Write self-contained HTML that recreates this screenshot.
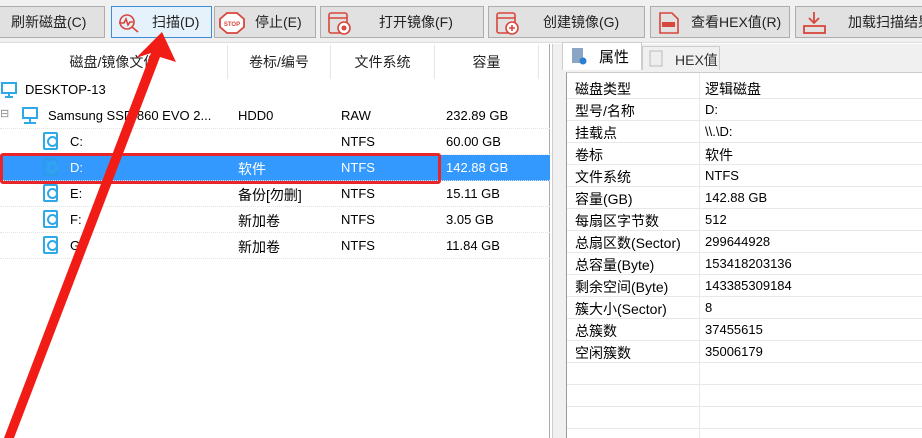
<!DOCTYPE html>
<html><head><meta charset="utf-8"><style>
*{margin:0;padding:0;box-sizing:border-box}
body{width:922px;height:438px;overflow:hidden;background:#fff;font-family:"Liberation Sans","Noto Sans CJK SC",sans-serif;font-size:13px;color:#000;position:relative}
.tb{position:absolute;left:0;top:0;width:922px;height:43px;background:#f0f0f0;border-bottom:1px solid #ddd}
.btn{position:absolute;top:6px;height:32px;background:#e1e1e1;border:1px solid #adadad;display:flex;align-items:center;font-size:14px;color:#222}
.btn.sel{background:#e5f1fb;border:1px solid #3c8cd8}
.ab{position:absolute}
.hdr{position:absolute;top:45px;height:34px;font-size:14px;display:flex;align-items:center;justify-content:center;border-right:1px solid #e5e5e5;color:#222}
.row{position:absolute;left:0;width:550px;height:26px;border-bottom:1px dotted #e3e3e3;font-size:13px}
.row span{position:absolute;top:5px}
.prow{position:absolute;left:567px;width:355px;height:22px;border-bottom:1px solid #e8e8e8;font-size:14px}
.prow span{position:absolute;top:2px}
.prow .v{left:138px;font-size:13px;top:3px}
.disk{position:absolute;width:15px;height:18px;border:2px solid #2fa8e8;border-radius:2px}
.disk:after{content:"";position:absolute;left:2px;top:2px;width:7px;height:7px;border:2px solid #2fa8e8;border-radius:50%}
</style></head><body>
<div class="tb">
 <div class="btn" style="left:-2px;width:107px;padding-left:12px">刷新磁盘(C)</div>
 <div class="btn sel" style="left:111px;width:101px">
  <svg class="ab" style="left:6px;top:6px" width="22" height="20" viewBox="0 0 22 20"><circle cx="9" cy="9" r="7" fill="none" stroke="#d9463b" stroke-width="1.6"/><path d="M1 10 L6 10 L8 6 L10 12 L12 9 L15 9 M14 14 L20 19" fill="none" stroke="#d9463b" stroke-width="1.6"/></svg>
  <span style="position:absolute;left:40px">扫描(D)</span></div>
 <div class="btn" style="left:214px;width:102px">
  <svg class="ab" style="left:4px;top:5px" width="26" height="22" viewBox="0 0 26 22"><polygon points="8,1 18,1 25,7 25,15 18,21 8,21 1,15 1,7" fill="#fff" stroke="#d9463b" stroke-width="1.8"/><text x="13" y="14" font-size="6" text-anchor="middle" fill="#d9463b" font-family="Liberation Sans" font-weight="bold">STOP</text></svg>
  <span style="position:absolute;left:40px">停止(E)</span></div>
 <div class="btn" style="left:320px;width:164px">
  <svg class="ab" style="left:6px;top:3px" width="26" height="26" viewBox="0 0 26 26"><rect x="2" y="3" width="18" height="20" rx="2" fill="none" stroke="#d9463b" stroke-width="1.6"/><line x1="2" y1="8" x2="20" y2="8" stroke="#d9463b" stroke-width="1.4"/><circle cx="17" cy="18" r="6" fill="#fff" stroke="#d9463b" stroke-width="1.6"/><circle cx="17" cy="18" r="2.5" fill="#d9463b"/></svg>
  <span style="position:absolute;left:58px">打开镜像(F)</span></div>
 <div class="btn" style="left:488px;width:157px">
  <svg class="ab" style="left:6px;top:3px" width="26" height="26" viewBox="0 0 26 26"><rect x="2" y="3" width="18" height="20" rx="2" fill="none" stroke="#d9463b" stroke-width="1.6"/><line x1="2" y1="8" x2="20" y2="8" stroke="#d9463b" stroke-width="1.4"/><circle cx="17" cy="18" r="6" fill="#fff" stroke="#d9463b" stroke-width="1.6"/><path d="M14 18h6M17 15v6" stroke="#d9463b" stroke-width="1.6"/></svg>
  <span style="position:absolute;left:54px">创建镜像(G)</span></div>
 <div class="btn" style="left:650px;width:140px">
  <svg class="ab" style="left:6px;top:4px" width="24" height="24" viewBox="0 0 24 24"><path d="M3 2h12l6 6v14H3z" fill="none" stroke="#d9463b" stroke-width="1.6"/><rect x="5" y="11" width="13" height="5" fill="#d9463b"/></svg>
  <span style="position:absolute;left:40px">查看HEX值(R)</span></div>
 <div class="btn" style="left:795px;width:140px">
  <svg class="ab" style="left:6px;top:4px" width="26" height="24" viewBox="0 0 26 24"><path d="M12 1v11M7 7l5 5 5-5" fill="none" stroke="#d9463b" stroke-width="1.8"/><rect x="2" y="15" width="21" height="7" fill="none" stroke="#d9463b" stroke-width="1.8"/></svg>
  <span style="position:absolute;left:52px">加载扫描结果</span></div>
</div>

<div class="ab" style="left:0;top:44px;width:553px;height:394px;background:#fff;border-right:1px solid #ccc"></div>
<div class="hdr" style="left:0;width:228px">磁盘/镜像文件</div>
<div class="hdr" style="left:228px;width:103px">卷标/编号</div>
<div class="hdr" style="left:331px;width:104px">文件系统</div>
<div class="hdr" style="left:435px;width:104px">容量</div>
<div class="ab" style="left:549px;top:44px;width:1px;height:394px;background:#aaa"></div>

<div class="row" style="top:77px;border:none"><svg class="ab" style="left:0;top:4px" width="18" height="18" viewBox="0 0 18 18"><rect x="2" y="2" width="14" height="10" fill="none" stroke="#2fa8e8" stroke-width="2"/><path d="M5 16h8M9 12v4" stroke="#2fa8e8" stroke-width="2"/></svg><span style="left:25px">DESKTOP-13</span></div>
<div class="row" style="top:103px"><span style="left:0;top:4px;color:#888;font-size:11px">⊟</span><svg class="ab" style="left:21px;top:3px" width="18" height="20" viewBox="0 0 18 20"><rect x="2" y="2" width="14" height="10" fill="none" stroke="#2fa8e8" stroke-width="2"/><path d="M9 12v4M3 17h12" stroke="#2fa8e8" stroke-width="2"/></svg><span style="left:48px">Samsung SSD 860 EVO 2...</span><span style="left:238px">HDD0</span><span style="left:341px">RAW</span><span style="left:446px">232.89 GB</span></div>
<div class="row" style="top:129px"><div class="disk" style="left:43px;top:3px"></div><span style="left:70px">C:</span><span style="left:341px">NTFS</span><span style="left:446px">60.00 GB</span></div>
<div class="row" style="top:155px;background:#3399ff;color:#fff;height:26px"><div class="disk" style="left:43px;top:3px;border-color:#2b9ce6"></div><span style="left:70px">D:</span><span style="left:238px;font-size:14px;top:4px">软件</span><span style="left:341px">NTFS</span><span style="left:446px">142.88 GB</span></div>
<div class="row" style="top:181px"><div class="disk" style="left:43px;top:3px"></div><span style="left:70px">E:</span><span style="left:238px;font-size:14px;top:4px">备份[勿删]</span><span style="left:341px">NTFS</span><span style="left:446px">15.11 GB</span></div>
<div class="row" style="top:207px"><div class="disk" style="left:43px;top:3px"></div><span style="left:70px">F:</span><span style="left:238px;font-size:14px;top:4px">新加卷</span><span style="left:341px">NTFS</span><span style="left:446px">3.05 GB</span></div>
<div class="row" style="top:233px"><div class="disk" style="left:43px;top:3px"></div><span style="left:70px">G:</span><span style="left:238px;font-size:14px;top:4px">新加卷</span><span style="left:341px">NTFS</span><span style="left:446px">11.84 GB</span></div>
<div class="ab" style="left:0;top:153px;width:441px;height:31px;border:3px solid #e8262a;border-radius:3px"></div>

<div class="ab" style="left:553px;top:44px;width:369px;height:394px;background:#f0f0f0"></div>
<div class="ab" style="left:562px;top:42px;width:80px;height:28px;background:#fff;border:1px solid #ccc;border-bottom:none;font-size:15px"><svg class="ab" style="left:8px;top:4px" width="16" height="18" viewBox="0 0 16 18"><rect x="1" y="1" width="11" height="15" fill="#8aa6c4"/><circle cx="12" cy="14" r="3.5" fill="#2a7fd4"/></svg><span class="ab" style="left:36px;top:3px">属性</span></div>
<div class="ab" style="left:642px;top:46px;width:78px;height:24px;border:1px solid #ccc;border-bottom:none;font-size:14px;color:#333"><svg class="ab" style="left:6px;top:3px" width="14" height="17"><rect x="1" y="1" width="12" height="15" fill="#eee" stroke="#bbb"/></svg><span class="ab" style="left:32px;top:3px">HEX值</span></div>
<div class="ab" style="left:566px;top:72px;width:356px;height:366px;background:#fff;border-left:1px solid #999;border-top:1px solid #ccc"></div>
<div class="ab" style="left:699px;top:73px;width:1px;height:365px;background:#e8e8e8"></div>
<div class="prow" style="top:77px"><span style="left:8px">磁盘类型</span><span class="v" style="font-size:14px;top:2px">逻辑磁盘</span></div>
<div class="prow" style="top:99px"><span style="left:8px">型号/名称</span><span class="v">D:</span></div>
<div class="prow" style="top:121px"><span style="left:8px">挂载点</span><span class="v">\\.\D:</span></div>
<div class="prow" style="top:143px"><span style="left:8px">卷标</span><span class="v" style="font-size:14px;top:2px">软件</span></div>
<div class="prow" style="top:165px"><span style="left:8px">文件系统</span><span class="v">NTFS</span></div>
<div class="prow" style="top:187px"><span style="left:8px">容量(GB)</span><span class="v">142.88 GB</span></div>
<div class="prow" style="top:209px"><span style="left:8px">每扇区字节数</span><span class="v">512</span></div>
<div class="prow" style="top:231px"><span style="left:8px">总扇区数(Sector)</span><span class="v">299644928</span></div>
<div class="prow" style="top:253px"><span style="left:8px">总容量(Byte)</span><span class="v">153418203136</span></div>
<div class="prow" style="top:275px"><span style="left:8px">剩余空间(Byte)</span><span class="v">143385309184</span></div>
<div class="prow" style="top:297px"><span style="left:8px">簇大小(Sector)</span><span class="v">8</span></div>
<div class="prow" style="top:319px"><span style="left:8px">总簇数</span><span class="v">37455615</span></div>
<div class="prow" style="top:341px"><span style="left:8px">空闲簇数</span><span class="v">35006179</span></div>
<div class="prow" style="top:363px"></div>
<div class="prow" style="top:385px"></div>
<div class="prow" style="top:407px"></div>

<svg class="ab" style="left:0;top:0" width="922" height="438" viewBox="0 0 922 438"><polygon points="162,32 176,62 160,57 14,438 4,438 151,53 136,58" fill="#f21c16"/></svg>
</body></html>
